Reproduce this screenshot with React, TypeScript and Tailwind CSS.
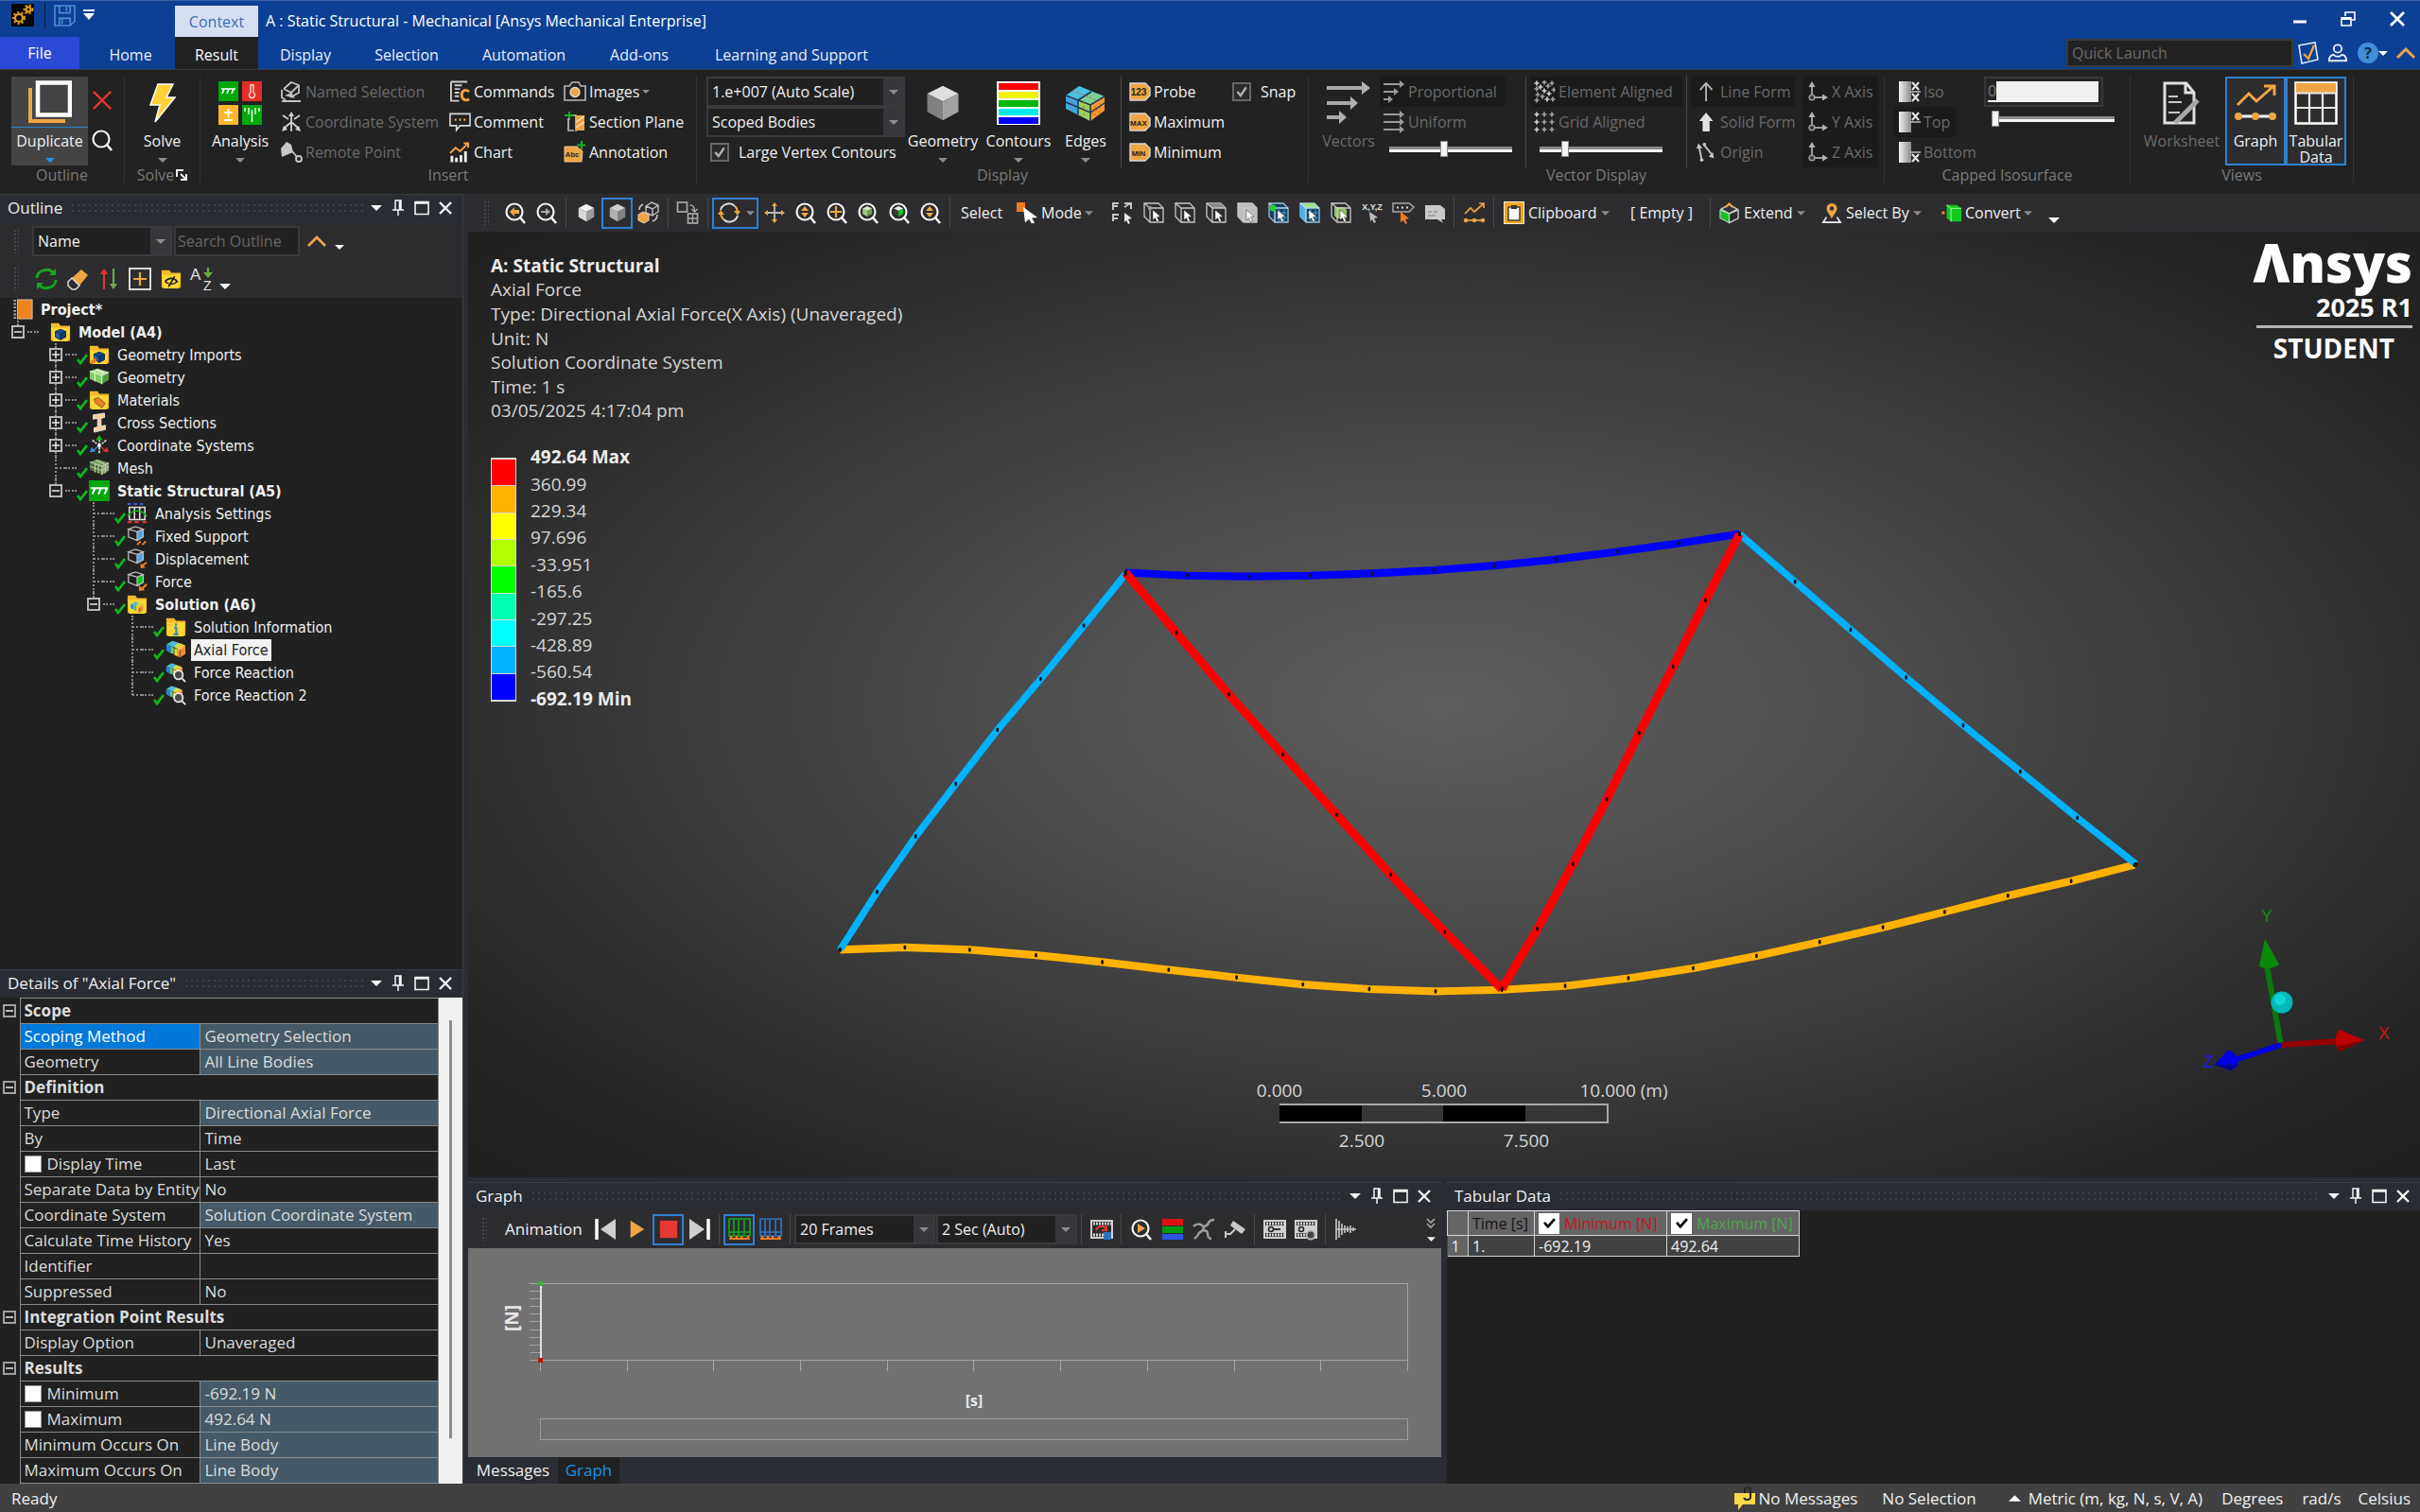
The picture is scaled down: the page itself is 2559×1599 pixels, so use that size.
import React from "react";

type P = { children?: React.ReactNode };

/* ---------- drawing helpers ---------- */
const ORANGE = "#efa544";

function Svg({ children, w = 24, h = 24, vb = "0 0 24 24" }: P & { w?: number; h?: number; vb?: string }) {
  return (
    <svg width={w} height={h} viewBox={vb} fill="none" className="shrink-0" aria-hidden="true">
      {children}
    </svg>
  );
}

function Tri({ w = 10, color = "#8c8c8c", up = false }: { w?: number; color?: string; up?: boolean }) {
  return (
    <Svg w={w} h={Math.round(w / 2)} vb="0 0 10 5">
      <path d={up ? "M0 5h10L5 0z" : "M0 0h10L5 5z"} fill={color} />
    </Svg>
  );
}

function CubeShape({ t = "#e8e8e8", l = "#c4c4c4", r = "#a4a4a4" }: { t?: string; l?: string; r?: string }) {
  return (
    <g>
      <path d="M12 2l9 4.5L12 11 3 6.500z" fill={t} />
      <path d="M3 6.500L12 11v11l-9-5z" fill={l} />
      <path d="M21 6.500L12 11v11l9-5z" fill={r} />
    </g>
  );
}

function Lens({ children, color = "#f2f2f2" }: P & { color?: string }) {
  return (
    <Svg>
      <circle cx="11" cy="11" r="8.500" stroke={color} strokeWidth="2.200" />
      <path d="M17 17l5 6" stroke={color} strokeWidth="2.600" />
      {children}
    </Svg>
  );
}

function PickBox({ kind }: { kind: number }) {
  const line = "#c9c9c9";
  const blue = kind === 4 || kind === 5;
  return (
    <Svg>
      <path d="M2 2h15l5 5v15H8l-6-6z" stroke={blue ? "#9fc3dc" : line} strokeWidth="1.300" fill={kind === 3 ? "#bdbdbd" : blue ? "#17405c" : "none"} />
      {kind === 2 && <path d="M2 2h15l5 5H8z" fill="#8a8a8a" />}
      {kind === 5 && <path d="M2 2h15l5 5H8z" fill="#a6e08f" />}
      {kind === 5 && <path d="M2 2l6 5v15l-6-6z" fill="#4fb0e6" />}
      {kind === 6 && <path d="M5 6h10l3 3v9H8l-3-3z" fill="#8fc65c" />}
      <path d="M2 2l6 5v15M8 7h14" stroke={blue ? "#bfe0ee" : line} strokeWidth="1.300" />
      {blue && <path d="M13 7v15M18 7v15M8 12h14M8 17h14" stroke="#4796cc" strokeWidth="1" />}
      {kind === 4 && <circle cx="6" cy="7" r="3.500" fill="#1fd03b" />}
      {kind === 0 && <circle cx="8" cy="7" r="2.200" fill="#9a9a9a" />}
      <path d="M11 9l8 7-3.500.500 2 4.500-2 1-2-4.500-2.500 2z" fill="#fff" stroke="#333" strokeWidth=".5" />
    </Svg>
  );
}

const Folder = ({ children }: P) => (
  <Svg w={22} h={22}>
    <path d="M1 2h9l2 3h11v17H1z" fill="#f4b92c" />
    <path d="M1 7h22l-2 16H3z" fill="#ffd735" />
    {children}
  </Svg>
);

const MiniCube = () => (
  <g stroke="#0b2d55" strokeWidth="1">
    <path d="M12 9l6 2.500-6 3-6-3z" fill="#12508c" />
    <path d="M6 11.500v6.500l6 3v-6.500z" fill="#1f5fa3" />
    <path d="M18 11.500v6.500l-6 3v-6.500z" fill="#0e3a6e" />
  </g>
);

const Blocks = ({ a, b, c, grid }: { a: string; b: string; c: string; grid?: string }) => (
  <g>
    <path d="M1 5l9-3 13 4-8 4z" fill={a} />
    <path d="M1 5v9l14 6V10z" fill={b} />
    <path d="M23 6v9l-8 5V10z" fill={c} />
    <path d="M1 5l14 5 8-4M15 10v10M7 7v10M8 3l10 4" stroke={grid ?? "#e9f5e2"} strokeWidth="1.200" />
    {grid && <path d="M1 10l14 5 8-5M11 8v10M19 8v10" stroke={grid} strokeWidth="1" />}
  </g>
);

const Rainbow = () => (
  <g>
    <path d="M1 6l7-4 15 5-6 5z" fill="#3fd0a0" />
    <path d="M1 6v7l5 3V8z" fill="#2f7fe0" />
    <path d="M6 8v8l4 1V10z" fill="#5fd08a" />
    <path d="M8 2l6 2-4 5-5-2z" fill="#5ab4e8" />
    <path d="M14 4l5 2-5 5-4-2z" fill="#c8e24c" />
    <path d="M10 10v8l4 2v-8z" fill="#e6dc3a" />
    <path d="M14 12v8l3 1 6-4V8z" fill="#f08a3a" />
    <path d="M18 5l5 3-7 5-3-1z" fill="#f5c23c" />
    <path d="M10 9v9M17 12v9" stroke="#4a3a20" strokeWidth=".8" />
  </g>
);

const WireCube = ({ fill }: { fill: string }) => (
  <g>
    <path d="M12 7l7-3v9l-7 4z" fill={fill} />
    <path d="M2 4l8-3 9 3-7 3zM2 4v9l10 4V7M19 4v9l-7 4" stroke="#bdbdbd" strokeWidth="1.400" />
  </g>
);

/* ---------- shared controls ---------- */
function Combo({ name, value }: { name: string; value: string }) {
  return (
    <div className="relative flex h-[32px] w-full shrink-0 border-2 border-[#3a3a3d] bg-[#212121]">
      <select aria-label={name} defaultValue={value} className="w-full appearance-none bg-transparent pl-1 text-[#f0f0f0] outline-none">
        <option>{value}</option>
      </select>
      <span className="pointer-events-none absolute inset-y-0 right-0 flex w-[21px] items-center justify-center bg-[#37373b]">
        <Tri />
      </span>
    </div>
  );
}

function Tick({ label }: { label: string }) {
  return (
    <label className="flex h-[32px] items-center gap-[10px]">
      <span className="relative flex size-[20px]">
        <input type="checkbox" defaultChecked className="size-[20px] appearance-none border-2 border-[#66666a] bg-[#2b2b2e]" />
        <span className="pointer-events-none absolute inset-0 flex items-center justify-center">
          <Svg w={14} h={14}><path d="M4 12l6 7L20 4" stroke="#b5b5b5" strokeWidth="4" /></Svg>
        </span>
      </span>
      {label}
    </label>
  );
}

function Slide({ name, value }: { name: string; value: number }) {
  return (
    <input
      type="range"
      aria-label={name}
      defaultValue={value}
      className="block h-[26px] w-[130px] appearance-none bg-transparent [&::-webkit-slider-runnable-track]:h-[6px] [&::-webkit-slider-runnable-track]:border-b-[3px] [&::-webkit-slider-runnable-track]:border-[#f4f4f4] [&::-webkit-slider-runnable-track]:bg-[#8a8a8a] [&::-webkit-slider-thumb]:-mt-[6px] [&::-webkit-slider-thumb]:h-[17px] [&::-webkit-slider-thumb]:w-[8px] [&::-webkit-slider-thumb]:appearance-none [&::-webkit-slider-thumb]:border [&::-webkit-slider-thumb]:border-[#8a8a8a] [&::-webkit-slider-thumb]:bg-[#f4f4f4]"
    />
  );
}

function Big({ icon, label, w, off, on, arrow = true }: { icon: React.ReactNode; label: string; w: string; off?: boolean; on?: boolean; arrow?: boolean }) {
  return (
    <button className={`flex h-[94px] flex-col items-center border-2 ${w} ${on ? "border-[#2f80d0] bg-[#2d2d30]" : "border-transparent"} ${off ? "text-[#6a6a6a]" : ""}`}>
      <span className="flex h-[52px] shrink-0 items-center justify-center">{icon}</span>
      <span className="pt-[6px] leading-[17px]">{label}</span>
      {arrow && <span className="mt-auto pb-[1px]"><Tri /></span>}
    </button>
  );
}

function Row({ icon, label, off, dark, arrow, w = "" }: { icon: React.ReactNode; label: string; off?: boolean; dark?: boolean; arrow?: boolean; w?: string }) {
  return (
    <button className={`flex h-[32px] shrink-0 items-center gap-[3px] whitespace-nowrap ${w} ${off ? "text-[#6a6a6a]" : ""} ${dark ? "bg-[#1b1b1b]" : ""}`}>
      {icon}
      {label}
      {arrow && <Tri w={8} />}
    </button>
  );
}

function Group({ label, w, children, extra }: P & { label: string; w: string; extra?: React.ReactNode }) {
  return (
    <section className={`flex h-[112px] shrink-0 flex-col border-r border-[#343434] ${w}`}>
      <div className="flex h-[96px]">{children}</div>
      <div className="flex h-4 items-center justify-center gap-[2px] leading-4 text-[#7a7a7a]">{label}{extra}</div>
    </section>
  );
}

const Sep = () => <span className="mx-1 h-[32px] w-px shrink-0 bg-[#4a4a4d]" />;
const VLine = ({ m }: { m: string }) => <span className={`h-full w-px shrink-0 bg-[#4a4a4a] ${m}`} />;
const Grip = () => <span className="h-[26px] w-[6px] shrink-0 bg-[radial-gradient(#48484d_1px,transparent_1px)] bg-[length:4px_4px]" />;

function Tool({ name, on, children }: P & { name: string; on?: boolean }) {
  return (
    <button aria-label={name} className={`flex size-[33px] shrink-0 items-center justify-center border-2 ${on ? "border-[#2f80d0]" : "border-transparent"}`}>
      {children}
    </button>
  );
}

function PanelHead({ title }: { title: string }) {
  return (
    <header className="flex h-[30px] shrink-0 items-center border-t border-[#3a3d44] bg-[#292c32] pr-[11px] pb-px pl-2 text-[17px]">
      <h2>{title}</h2>
      <span className="mx-2 h-[12px] flex-1 bg-[radial-gradient(#3f434a_1px,transparent_1px)] bg-[length:6px_6px]" />
      <div className="flex items-center gap-[10px]">
        <button aria-label="Menu"><Tri w={12} color="#f4f4f4" /></button>
        <button aria-label="Pin"><Svg w={14} h={18} vb="0 0 14 18"><path d="M4 1h6v10H4zM8.500 1v10M1 11h12M7 11v6" stroke="#f4f4f4" strokeWidth="1.500" /></Svg></button>
        <button aria-label="Maximize"><Svg w={16} h={16} vb="0 0 16 16"><path d="M1 1.500h14v13H1zM1 3h14" stroke="#f4f4f4" strokeWidth="1.600" /></Svg></button>
        <button aria-label="Close"><Svg w={14} h={14} vb="0 0 14 14"><path d="M1 1l12 12M13 1L1 13" stroke="#f4f4f4" strokeWidth="2.400" /></Svg></button>
      </div>
    </header>
  );
}

/* ---------- title bar and tabs ---------- */
const Gear = ({ x, y, r }: { x: number; y: number; r: number }) => (
  <g stroke="#e8a21c">
    <circle cx={x} cy={y} r={r} strokeWidth="2.200" />
    <circle cx={x} cy={y} r={r + 2} strokeWidth="2" strokeDasharray="2 2.300" />
  </g>
);

function TitleBar() {
  return (
    <header className="bg-[#0c4094]">
      <div className="flex h-[39px] items-center border-t border-[#3a62a8]">
        <div className="flex w-[185px] items-center pb-2 pl-3">
          <Svg w={24} h={24}>
            <rect width="24" height="24" fill="#060606" />
            <Gear x={8} y={15} r={4} />
            <Gear x={18} y={6} r={2.500} />
          </Svg>
          <span className="ml-[11px] h-[28px] w-px bg-[#0a1c40]" />
          <button aria-label="Save" className="ml-[9px]">
            <Svg w={23} h={23}><path d="M1 1h22v17l-5 5H1zM6 1v8h12V1M14 2v5M6 23v-8h12v8M9 16v5" stroke="#4a8fd0" strokeWidth="1.700" /></Svg>
          </button>
          <button aria-label="Customize quick access" className="ml-2">
            <Svg w={12} h={12} vb="0 0 12 12"><path d="M0 1h12" stroke="#fff" strokeWidth="2" /><path d="M0 4h12L6 11z" fill="#fff" /></Svg>
          </button>
        </div>
        <span className="flex h-[33px] w-[88px] items-center justify-center self-end bg-[#d5dff1] text-[#3e6db5]">Context</span>
        <h1 className="ml-2 pt-1 text-white">A : Static Structural - Mechanical [Ansys Mechanical Enterprise]</h1>
        <div className="ml-auto flex items-center gap-[36px] pr-4">
          <button aria-label="Minimize"><Svg w={14} h={14} vb="0 0 14 14"><path d="M0 10h14" stroke="#fff" strokeWidth="3" /></Svg></button>
          <button aria-label="Restore"><Svg w={16} h={18} vb="0 0 16 18"><path d="M5 6V2h10v8h-4M1 8h10v8H1z" stroke="#fff" strokeWidth="1.600" /><path d="M1 8.500h10" stroke="#fff" strokeWidth="3" /></Svg></button>
          <button aria-label="Close window"><Svg w={16} h={16} vb="0 0 16 16"><path d="M1 1l14 14M15 1L1 15" stroke="#fff" strokeWidth="2.800" /></Svg></button>
        </div>
      </div>
      <nav className="flex h-[34px] items-stretch text-[#e8eefa]">
        <button className="mr-[7px] w-[84px] bg-[#2b49d6] text-white">File</button>
        <button className="w-[94px] pt-1">Home</button>
        <button className="w-[88px] bg-[#222] pt-1 text-white">Result</button>
        <button className="w-[100px] pt-1">Display</button>
        <button className="w-[114px] pt-1">Selection</button>
        <button className="w-[134px] pt-1">Automation</button>
        <button className="w-[110px] pt-1">Add-ons</button>
        <button className="w-[212px] pt-1">Learning and Support</button>
        <div className="ml-auto flex items-center pr-1">
          <input aria-label="Quick Launch" placeholder="Quick Launch" className="h-[30px] w-[240px] border-2 border-[#3a3a3a] bg-[#222] px-[4px] outline-none placeholder:text-[#6b6b6b]" />
          <button aria-label="Tasks" className="ml-1">
            <Svg w={24} h={24}><path d="M2 4l17-3 3 18-17 4z" stroke="#dfe8f8" strokeWidth="1.600" /><path d="M7 13l5 5 6-14" stroke={ORANGE} strokeWidth="2.400" /></Svg>
          </button>
          <button aria-label="Account" className="ml-2">
            <Svg w={22} h={22}><circle cx="12" cy="7" r="4.500" stroke="#e8eefa" strokeWidth="2" /><path d="M2 21c0-6 4-7 5-7 3 3 7 3 10 0 1 0 5 1 5 7z" stroke="#e8eefa" strokeWidth="2" /></Svg>
          </button>
          <button aria-label="Help" className="ml-[10px] flex items-center">
            <span className="flex size-[22px] items-center justify-center rounded-full bg-[#3f8fd8] font-bold text-[#0c2350]">?</span>
            <Tri w={10} color="#fff" />
          </button>
          <button aria-label="Collapse ribbon" className="ml-2">
            <Svg w={22} h={14} vb="0 0 22 14"><path d="M2 12l9-9 9 9" stroke={ORANGE} strokeWidth="3" /></Svg>
          </button>
        </div>
      </nav>
    </header>
  );
}

/* ---------- ribbon ---------- */
const Tag = ({ t }: { t: string }) => (
  <Svg w={23} h={20} vb="0 0 23 20">
    <path d="M1 1h16l5 5v8l-5 5H1z" fill={ORANGE} stroke="#d8d8d8" strokeWidth="1.400" />
    <text x="10" y="13.500" textAnchor="middle" fontSize={t === "123" ? 10 : 8} fontWeight="700" fontFamily="Liberation Sans, sans-serif" fill="#222">{t}</text>
  </Svg>
);
const Axis = () => (
  <Svg w={24} h={24}>
    <path d="M6 18V3M6 18h15" stroke="#9c9c9c" strokeWidth="2" />
    <path d="M2.500 7L6 1l3.500 6zM17 14.500l6 3.500-6 3.500z" fill="#b5b5b5" />
    <circle cx="6" cy="18" r="2.800" stroke="#9c9c9c" strokeWidth="1.600" fill="#333" />
  </Svg>
);
const Lines = ({ xs }: { xs: number[] }) => (
  <Svg w={23} h={24} vb="0 0 23 24">
    {xs.map((x, i) => (
      <g key={i}>
        <path d={`M0 ${4 + i * 8}h${x}`} stroke="#9a9a9a" strokeWidth="2" />
        <path d={`M${x - 3} ${i * 8}l5 4-5 4z`} fill="#9a9a9a" />
      </g>
    ))}
  </Svg>
);
const Iso = ({ a, b }: { a: boolean; b: boolean }) => (
  <Svg w={23} h={24} vb="0 0 23 24">
    <defs><linearGradient id="isoFade"><stop offset="0" stopColor="#f2f2f2" /><stop offset="1" stopColor="#8b8b8b" /></linearGradient></defs>
    <rect x="0" y="1" width="13" height="22" fill="url(#isoFade)" />
    {a && <path d="M14 2l7 8M21 2l-7 8" stroke="#e2e2e2" strokeWidth="2.200" />}
    <path d="M12 12h11" stroke="#bbb" strokeWidth="1.500" />
    {b && <path d="M14 14l7 8M21 14l-7 8" stroke="#e2e2e2" strokeWidth="2.200" />}
  </Svg>
);
const Dots = ({ even }: { even?: boolean }) => (
  <Svg w={23} h={24} vb="0 0 23 24">
    {(even
      ? [[3, 4], [11, 4], [19, 4], [3, 12], [11, 12], [19, 12], [3, 20], [11, 20], [19, 20]]
      : [[3, 3], [11, 2], [19, 3], [7, 7], [15, 6], [3, 9], [11, 11], [21, 10], [4, 15], [16, 14], [9, 17], [3, 21], [14, 20], [20, 20]]
    ).map(([x, y], i) => (
      <path key={i} d={`M${x - 2.500} ${y}h5M${x} ${y - 2.500}v5`} stroke={i % 3 ? "#a0a0a0" : "#cfcfcf"} strokeWidth="1.700" />
    ))}
  </Svg>
);

function Ribbon() {
  return (
    <div className="flex h-[132px] overflow-hidden border-t border-[#3b3b3b] bg-[#222222] pt-[7px]">
      <Group label="Outline" w="w-[132px]">
        <div className="flex pl-3">
          <button className="flex h-[94px] w-[81px] flex-col items-center bg-[#444444]">
            <span className="flex h-[54px] w-full items-center justify-center border-b border-[#2f80c8]">
              <Svg w={46} h={46} vb="0 0 46 46">
                <path d="M2 8v35h37" stroke={ORANGE} strokeWidth="4" />
                <rect x="10" y="2.500" width="34" height="34" stroke="#fff" strokeWidth="4.500" fill="#444" />
              </Svg>
            </span>
            <span className="leading-[28px]">Duplicate</span>
            <span className="pt-1"><Tri color="#2f8fd8" /></span>
          </button>
          <div className="flex w-[30px] flex-col pt-1">
            <button aria-label="Delete" className="flex h-[42px] items-center justify-center"><Svg w={22} h={22}><path d="M2 2l20 20M22 2L2 22" stroke="#e5332f" strokeWidth="2.600" /></Svg></button>
            <button aria-label="Find" className="flex h-[42px] items-center justify-center"><Lens /></button>
          </div>
        </div>
      </Group>
      <Group label="Solve" w="w-[80px]" extra={<Svg w={12} h={12} vb="0 0 12 12"><path d="M1 8V1h7" stroke="#eee" strokeWidth="2" /><path d="M5 5l5 5M11 5v6H5" stroke="#eee" strokeWidth="2" /></Svg>}>
        <Big w="w-full" label="Solve" icon={<Svg w={28} h={42} vb="0 0 28 42"><path d="M9 1h16l-7 14h9L6 41l5-18H1z" fill="#ffd23c" stroke="#fff" strokeWidth="1.500" /></Svg>} />
      </Group>
      <Group label="Insert" w="w-[525px]">
        <Big w="w-[84px]" label="Analysis" icon={
          <Svg w={46} h={46} vb="0 0 46 46">
            <rect width="21" height="21" fill="#00a80b" /><rect x="25" width="21" height="21" fill="#e03027" />
            <rect y="25" width="21" height="21" fill="#fbb829" /><rect x="25" y="25" width="21" height="21" fill="#00a80b" />
            <path d="M3 8h15M6 8l-2 5M11 8l-2 5M16 8l-2 5" stroke="#fff" strokeWidth="1.600" />
            <path d="M34 4h3v8a3 3 0 11-3 0z" stroke="#ffd7d3" strokeWidth="1.400" />
            <path d="M6 33h9M10.500 29v9M6 41h9" stroke="#fff" strokeWidth="1.800" />
            <path d="M35.500 30v13M28 28v4M32 28v7M39 28v7M43 28v4" stroke="#d7ffd9" strokeWidth="1.600" />
          </Svg>} />
        <div className="flex w-[179px] flex-col">
          <Row off label="Named Selection" icon={<Svg w={24}><path d="M4 9l8-7 8 3v8l-9 5M4 9l8 4 8-8M12 13v5M2 22h20M2 10v8l4 3" stroke="#c4c4c4" strokeWidth="1.800" /><path d="M5 16l7-3 4 6z" fill="#c4c4c4" /></Svg>} />
          <Row off label="Coordinate System" icon={<Svg w={24}><path d="M12 12V3M12 12l8 7M12 12l-8 7M12 12v10M3 5l6 4M21 5l-6 4" stroke="#d0d0d0" strokeWidth="1.800" /><path d="M9 6l3-5 3 5zM16 20l6 2-2-6zM8 20l-6 2 2-6z" fill="#d0d0d0" /></Svg>} />
          <Row off label="Remote Point" icon={<Svg w={24}><path d="M1 8l6-7 5 3 2 8-12 5z" fill="#c8c8c8" /><path d="M13 11l5 6" stroke="#c8c8c8" strokeWidth="1.800" /><circle cx="20" cy="19" r="3" stroke="#c8c8c8" strokeWidth="1.800" /></Svg>} />
        </div>
        <div className="flex w-[121px] flex-col">
          <Row label="Commands" icon={<Svg w={23}><path d="M2 1h18M2 1v21h9M6 5h8M6 9h6M6 13h5M6 17h5" stroke="#d0d0d0" strokeWidth="2" /><path d="M22 12c-5-4-9 0-8 5s6 5 8 3" stroke={ORANGE} strokeWidth="3" /></Svg>} />
          <Row label="Comment" icon={<Svg w={23}><path d="M1 3h22v13H12l-4 5v-5H1z" stroke="#d8d8d8" strokeWidth="1.700" /><path d="M6 9.500h2M11 9.500h2M16 9.500h2" stroke={ORANGE} strokeWidth="2.500" /></Svg>} />
          <Row label="Chart" icon={<Svg w={23}><path d="M3 16v7M8 18v5M13 15v8M18 11v12" stroke="#eee" strokeWidth="3" /><path d="M1 13l6-6 5 4 9-9M16 2h5v5" stroke={ORANGE} strokeWidth="2" /></Svg>} />
        </div>
        <div className="flex flex-col">
          <Row label="Images" arrow icon={<Svg w={24}><path d="M1 6h5l3-4h7l2 4h5v15H1z" stroke="#b8b8b8" strokeWidth="1.600" /><circle cx="12" cy="12.500" r="5" fill={ORANGE} stroke="#ddd" strokeWidth="1.300" /></Svg>} />
          <Row label="Section Plane" icon={<Svg w={24}><path d="M6 1v9M1 5h9" stroke="#12b51f" strokeWidth="1.800" /><path d="M5 8v13h6M10 5h3v17" stroke="#bbb" strokeWidth="1.700" /><path d="M13 5h9v16h-9z" fill={ORANGE} /><path d="M13 12l9-6M13 18l9-6" stroke="#fbe3c0" strokeWidth="1.500" /></Svg>} />
          <Row label="Annotation" icon={<Svg w={24}><path d="M1 6h13l6 5-1 11H1z" fill={ORANGE} stroke="#e5c79a" strokeWidth="1" /><text x="9" y="17" fontSize="8" fontWeight="700" textAnchor="middle" fill="#2a2a2a" fontFamily="Liberation Sans, sans-serif">Abc</text><path d="M19 0v9M14 4.500h9" stroke="#12b51f" strokeWidth="2" /></Svg>} />
        </div>
      </Group>
      <Group label="Display" w="w-[647px]">
        <div className="ml-[10px] flex w-[210px] flex-col">
          <Combo name="Result scale" value="1.e+007 (Auto Scale)" />
          <Combo name="Scoping" value="Scoped Bodies" />
          <div className="pl-1"><Tick label="Large Vertex Contours" /></div>
        </div>
        <Big w="w-[80px]" label="Geometry" icon={<Svg w={44} h={44}><CubeShape t="#dedede" l="#808080" r="#a2a2a2" /></Svg>} />
        <Big w="w-[80px]" label="Contours" icon={<Svg w={46} h={46} vb="0 0 46 46"><rect width="46" height="46" fill="#fff" />
          {["#fd0000", "#eef400", "#00b50b", "#00ecec", "#0000fd"].map((c, i) => <rect key={c} x="2" y={2 + i * 9} width="42" height="7" fill={c} />)}</Svg>} />
        <Big w="w-[62px]" label="Edges" icon={
          <Svg w={44} h={40} vb="0 0 44 40">
            <path d="M1 12L15 2l27 11-15 9z" fill="#4cc0e0" /><path d="M1 12v14l26 13V22z" fill="#3aa7e6" /><path d="M42 13v15L27 39V22z" fill="#f59a2f" />
            <path d="M14 17v15l13 7V22z" fill="#9ad05b" /><path d="M28 8l14 5-15 9-13-5z" fill="#7bd09a" />
            <path d="M1 12l26 10 15-9M27 22v17M14 17l14-9M14 17v15M1 19l26 11 15-10" stroke="#1b3550" strokeWidth="1.500" />
            <path d="M7 14v15M20 19v16M32 19v16M37 16v16M8 7l26 10M33 27l4 4M29 30l3 3" stroke="#e2573d" strokeWidth="1" strokeDasharray="2 2" />
          </Svg>} />
        <VLine m="ml-[6px]" />
        <div className="ml-2 flex w-[109px] flex-col">
          <Row label="Probe" icon={<Tag t="123" />} />
          <Row label="Maximum" icon={<Tag t="MAX" />} />
          <Row label="Minimum" icon={<Tag t="MIN" />} />
        </div>
        <div><Tick label="Snap" /></div>
      </Group>
      <Group label="Vector Display" w="w-[609px]">
        <div className="ml-[9px]"><Big off arrow={false} w="w-[66px]" label="Vectors" icon={
          <Svg w={46} h={46} vb="0 0 46 46"><path d="M0 7h38M0 23h26M0 38h14" stroke="#a8a8a8" strokeWidth="4" /><path d="M37 0l9 7-9 7zM25 16l8 7-8 7zM13 31l8 7-8 7z" fill="#b0b0b0" /></Svg>} /></div>
        <div className="flex w-[154px] flex-col">
          <Row off dark w="w-[133px] pl-1" label="Proportional" icon={<Lines xs={[20, 14, 8]} />} />
          <Row off w="pl-1" label="Uniform" icon={<Lines xs={[20, 20, 20]} />} />
          <div className="ml-[10px]"><Slide name="Vector length" value={44} /></div>
        </div>
        <VLine m="mr-[4px]" />
        <div className="flex w-[161px] flex-col">
          <Row off dark w="w-[161px] pl-1" label="Element Aligned" icon={<Dots />} />
          <Row off w="pl-1" label="Grid Aligned" icon={<Dots even />} />
          <div className="ml-[10px]"><Slide name="Grid density" value={19} /></div>
        </div>
        <VLine m="mx-[4px]" />
        <div className="flex w-[118px] flex-col">
          <Row off dark w="w-[110px] pl-[6px]" label="Line Form" icon={<Svg w={22}><path d="M11 23V4M4 10l7-8 7 8" stroke="#b8b8b8" strokeWidth="2" /></Svg>} />
          <Row off w="pl-[6px]" label="Solid Form" icon={<Svg w={22}><path d="M11 1l8 10h-4v12H7V11H3z" fill="#e2e2e2" /></Svg>} />
          <Row off w="pl-[6px]" label="Origin" icon={<Svg w={22}><path d="M6 21L3 6M9 4l9 11" stroke="#c8c8c8" strokeWidth="2" /><path d="M0 8l2-6 5 5zM20 19l-6-2 5-5z" fill="#c8c8c8" /><circle cx="6" cy="21" r="2" fill="#c8c8c8" /><circle cx="9" cy="3" r="2" fill="#c8c8c8" /></Svg>} />
        </div>
        <div className="flex w-[80px] flex-col">
          {["X Axis", "Y Axis", "Z Axis"].map((a) => <Row key={a} off dark w="w-full pl-1" label={a} icon={<Axis />} />)}
        </div>
      </Group>
      <Group label="Capped Isosurface" w="w-[260px]">
        <div className="ml-[10px] flex w-[95px] flex-col">
          <Row off w="pl-[5px]" label="Iso" icon={<Iso a b />} />
          <Row off dark w="w-[65px] pl-[5px]" label="Top" icon={<Iso a b={false} />} />
          <Row off w="pl-[5px]" label="Bottom" icon={<Iso a={false} b />} />
        </div>
        <div className="flex flex-col">
          <label className="flex h-[32px] w-[126px] shrink-0 items-center border-2 border-[#38383b] bg-[#252527] px-[2px] text-[#7a7a7a]">
            <span className="border-b-2 border-white leading-[20px]">0</span>
            <input aria-label="Isosurface value" className="h-[22px] w-[108px] bg-[#f0f0f0] outline-none" />
          </label>
          <div className="ml-2"><Slide name="Isosurface position" value={0} /></div>
        </div>
      </Group>
      <Group label="Views" w="w-[236px]">
        <div className="ml-[8px]"><Big off arrow={false} w="w-[92px]" label="Worksheet" icon={
          <Svg w={40} h={46} vb="0 0 40 46"><path d="M2 2h23l8 10v32H2zM24 2v10h9" stroke="#e0e0e0" strokeWidth="3" /><path d="M6 16h10M6 22h14M6 33h12" stroke="#c8c8c8" strokeWidth="2" /><path d="M37 20L17 40l-4 4" stroke="#a8a8a8" strokeWidth="5" /></Svg>} /></div>
        <Big on arrow={false} w="w-[64px]" label="Graph" icon={
          <Svg w={44} h={44} vb="0 0 44 44"><path d="M3 24l12-12 8 8L40 5M31 4h11v10" stroke={ORANGE} strokeWidth="3" /><path d="M2 36h40" stroke="#fff" strokeWidth="3" />{[4, 22, 40].map((x) => <circle key={x} cx={x} cy="36" r="4" fill={ORANGE} />)}</Svg>} />
        <Big on arrow={false} w="w-[64px]" label="Tabular Data" icon={
          <Svg w={46} h={46} vb="0 0 46 46"><rect x="1.500" y="1.500" width="43" height="43" stroke="#fff" strokeWidth="2.500" /><rect x="2" y="2" width="42" height="10" fill={ORANGE} /><path d="M2 12.500h42M2 28h42M16 12v32M30 12v32" stroke="#e8e8e8" strokeWidth="2.200" /></Svg>} />
      </Group>
    </div>
  );
}

/* ---------- outline tree ---------- */
type Node = { t: string; lv: number; ex?: "+" | "-"; check?: boolean; bold?: boolean; last?: boolean; sel?: boolean; icon: React.ReactNode };
const Ic = ({ children }: P) => <Svg w={22} h={22}>{children}</Svg>;
const reaction = <Ic><g transform="scale(.85)"><Rainbow /></g><circle cx="15" cy="15" r="5" stroke="#e6e6e6" strokeWidth="2" fill="#4a4a4a" /><path d="M19 19l4 4" stroke="#e6e6e6" strokeWidth="2" /></Ic>;
const nodes: Node[] = [
  { t: "Project*", lv: 0, bold: true, icon: <Ic><rect x="6" y="1" width="17" height="22" fill="#ee8322" stroke="#d9c3ad" /><path d="M3 1v22" stroke="#aaa" strokeWidth="3" strokeDasharray="2 2" /></Ic> },
  { t: "Model (A4)", lv: 1, ex: "-", bold: true, last: true, icon: <Folder><MiniCube /></Folder> },
  { t: "Geometry Imports", lv: 2, ex: "+", check: true, icon: <Folder><MiniCube /><path d="M3 22l5-5" stroke="#ee7b1f" strokeWidth="4" /></Folder> },
  { t: "Geometry", lv: 2, ex: "+", check: true, icon: <Ic><Blocks a="#b5e39a" b="#83cc63" c="#4f9a3c" /></Ic> },
  { t: "Materials", lv: 2, ex: "+", check: true, icon: <Folder><path d="M6 11l5-2 8 7-4 5-8-6z" fill="#e8822a" stroke="#7a5a10" /></Folder> },
  { t: "Cross Sections", lv: 2, ex: "+", check: true, icon: <Ic><path d="M5 3l13-2v5l-4 1v9l5-1v5L6 23v-5l4-1V7L5 8z" fill="#f6cf9c" stroke="#fff" strokeWidth=".8" /></Ic> },
  { t: "Coordinate Systems", lv: 2, ex: "+", check: true, icon: <Ic><path d="M12 12V4M4 6l5 4M20 6l-5 4M12 14v8" stroke="#ccc" strokeWidth="2" strokeDasharray="3 1" /><path d="M8 6l4-6 4 6z" fill="#12b51f" /><path d="M1 20l2-6 5 5z" fill="#3a8fe0" /><path d="M23 20l-2-6-5 5z" fill="#e03030" /><path d="M12 12l-7 6" stroke="#3a8fe0" strokeWidth="1.500" /><path d="M12 12l7 6" stroke="#e03030" strokeWidth="1.500" /><circle cx="12" cy="12" r="2.200" fill="#fff" /></Ic> },
  { t: "Mesh", lv: 2, check: true, icon: <Ic><Blocks a="#7a9a62" b="#4f6f3a" c="#8aa376" grid="#c5d4b6" /></Ic> },
  { t: "Static Structural (A5)", lv: 2, ex: "-", check: true, bold: true, last: true, icon: <Ic><rect width="24" height="24" fill="#00a80b" /><path d="M2 9h20M7 9l-3 7M14 9l-3 7M21 9l-3 7" stroke="#fff" strokeWidth="2.200" /></Ic> },
  { t: "Analysis Settings", lv: 3, check: true, icon: <Ic><path d="M3 5h18v14H3zM9 5v14M15 5v14" stroke="#e0e0e0" strokeWidth="1.700" /><path d="M1 15c6-8 16-8 22 0" stroke="#12b51f" strokeWidth="1.800" /><path d="M1 1h4M8 1h4M15 1h4" stroke="#3a5be0" strokeWidth="2.500" /><path d="M1 22h5M9 22h5M18 22h5" stroke="#e03030" strokeWidth="2.500" /></Ic> },
  { t: "Fixed Support", lv: 3, check: true, icon: <Ic><WireCube fill="#4fa3e8" /><path d="M12 22l4-4M18 22l4-4" stroke="#e8822a" strokeWidth="2" /></Ic> },
  { t: "Displacement", lv: 3, check: true, icon: <Ic><WireCube fill="#4fa3e8" /><path d="M16 23v-6l6 5z" fill="#e8822a" /><path d="M18 20l5-4" stroke="#e8822a" strokeWidth="2" /></Ic> },
  { t: "Force", lv: 3, check: true, icon: <Ic><WireCube fill="#12c51f" /><path d="M14 23v-7l7 6z" fill="#e8822a" /><path d="M18 20l5-5" stroke="#e8822a" strokeWidth="2.500" /></Ic> },
  { t: "Solution (A6)", lv: 3, ex: "-", check: true, bold: true, last: true, icon: <Folder><g transform="translate(4 8) scale(.65)"><Rainbow /></g></Folder> },
  { t: "Solution Information", lv: 4, check: true, icon: <Folder><path d="M12 8v3M10 13h2.500v7M9 20.500h6" stroke="#3a8fb0" strokeWidth="2.400" /></Folder> },
  { t: "Axial Force", lv: 4, check: true, sel: true, icon: <Ic><Rainbow /></Ic> },
  { t: "Force Reaction", lv: 4, check: true, icon: reaction },
  { t: "Force Reaction 2", lv: 4, check: true, last: true, icon: reaction },
];
const pad = ["pl-0", "pl-[8px]", "pl-[48px]", "pl-[88px]", "pl-[129px]"];

function Tree() {
  return (
    <ul className="flex-1 overflow-hidden bg-[#212121] font-['DejaVu_Sans_Condensed','DejaVu_Sans',sans-serif] text-[16px]">
      {nodes.map((n) => (
        <li key={n.t} className={`flex h-[24px] items-center ${pad[n.lv]}`}>
          {n.lv > 0 ? (
            <span className="relative flex h-full w-[21px] items-center justify-center">
              <span className={`absolute top-0 left-[10px] border-l-2 border-dotted border-[#8a8a8a] ${n.last ? "h-1/2" : "h-full"}`} />
              {n.ex ? (
                <button aria-label={n.ex === "+" ? `Expand ${n.t}` : `Collapse ${n.t}`} className="relative flex size-[14px] items-center justify-center border-2 border-[#b8b8b8] bg-[#212121]">
                  <Svg w={8} h={8} vb="0 0 8 8"><path d={n.ex === "+" ? "M0 4h8M4 0v8" : "M0 4h8"} stroke="#e8e8e8" strokeWidth="1.500" /></Svg>
                </button>
              ) : (
                <span className="ml-auto w-[10px] border-t-2 border-dotted border-[#8a8a8a]" />
              )}
            </span>
          ) : (
            <span className="w-[13px]" />
          )}
          {n.lv > 0 && <span className="w-[12px] border-t-2 border-dotted border-[#8a8a8a]" />}
          {n.check && (
            <span className="flex w-[13px] items-end pt-2"><Svg w={12} h={13} vb="0 0 12 13"><path d="M1 7l3 4 7-9" stroke="#12b51f" strokeWidth="2.800" /></Svg></span>
          )}
          {n.lv === 1 && <span className="w-[12px]" />}
          {n.icon}
          <span className={`ml-[5px] px-[3px] leading-[23px] whitespace-nowrap ${n.bold ? "font-bold" : ""} ${n.sel ? "bg-[#f2f2f2] text-[#222]" : ""}`}>{n.t}</span>
        </li>
      ))}
    </ul>
  );
}

function Outline() {
  return (
    <section className="flex min-h-0 flex-1 flex-col">
      <PanelHead title="Outline" />
      <div className="flex h-[40px] shrink-0 items-center bg-[#2d2d30] pl-[14px]">
        <Grip />
        <div className="ml-[14px] w-[148px]"><Combo name="Filter by" value="Name" /></div>
        <input aria-label="Search Outline" placeholder="Search Outline" className="ml-[2px] h-[32px] w-[133px] border-2 border-[#3a3a3d] bg-[#212121] px-[2px] outline-none placeholder:text-[#666]" />
        <button aria-label="Collapse search" className="ml-[8px]"><Svg w={20} h={12} vb="0 0 20 12"><path d="M1 11l9-9 9 9" stroke={ORANGE} strokeWidth="2.800" /></Svg></button>
        <button aria-label="More filters" className="mt-3 ml-[9px]"><Tri color="#f4f4f4" /></button>
      </div>
      <div className="flex h-[40px] shrink-0 items-center bg-[#2d2d30] pl-[14px]">
        <Grip />
        <div className="ml-[12px] flex items-center">
          <Tool name="Refresh"><Svg><path d="M2 11a10 9 0 0118-5M22 13a10 9 0 01-18 5" stroke="#12a51f" strokeWidth="2.800" /><path d="M22 1v7h-7zM2 23v-7h7z" fill="#12a51f" /></Svg></Tool>
          <Tool name="Clear"><Svg><path d="M6 11L16 2l7 6-9 11z" fill={ORANGE} /><path d="M6 11l8 8-4 4H6l-4-4v-4z" stroke="#ddd" strokeWidth="1.500" /></Svg></Tool>
          <Tool name="Sort"><Svg><path d="M7 23V5" stroke="#e5332f" strokeWidth="2.200" /><path d="M3 7l4-6 4 6z" fill="#e5332f" /><path d="M17 1v18" stroke="#6fa84a" strokeWidth="2.200" /><path d="M13 17l4 6 4-6z" fill="#6fa84a" /></Svg></Tool>
          <Tool name="Expand all"><Svg><path d="M1 1h22v22H1z" stroke="#d8d8d8" strokeWidth="2" /><path d="M12 5v14M5 12h14" stroke={ORANGE} strokeWidth="2.200" /></Svg></Tool>
          <Tool name="Hide folders"><Folder><path d="M5 15c4-5 10-5 14 0-4 4-10 4-14 0M16 9l-7 12" stroke="#222" strokeWidth="1.800" /></Folder></Tool>
          <Tool name="Sort alphabetically"><Svg w={29} h={32} vb="0 0 29 32"><text x="2" y="17" fontSize="17" fill="#e0e0e0" fontFamily="Liberation Sans, sans-serif">A</text><text x="16" y="28" fontSize="14" fill="#e0e0e0" fontFamily="Liberation Sans, sans-serif">Z</text><path d="M21 4v6" stroke="#6fa84a" strokeWidth="2.200" /><path d="M16 9l5 6 5-6z" fill="#6fa84a" /></Svg></Tool>
          <button aria-label="More tools" className="mt-4 ml-[2px]"><Tri w={12} color="#f4f4f4" /></button>
        </div>
      </div>
      <Tree />
    </section>
  );
}

/* ---------- details ---------- */
type D = { g?: string; k?: string; v?: string; ro?: boolean; box?: boolean; sel?: boolean };
const details: D[] = [
  { g: "Scope" },
  { k: "Scoping Method", v: "Geometry Selection", ro: true, sel: true },
  { k: "Geometry", v: "All Line Bodies", ro: true },
  { g: "Definition" },
  { k: "Type", v: "Directional Axial Force", ro: true },
  { k: "By", v: "Time" },
  { k: "Display Time", v: "Last", box: true },
  { k: "Separate Data by Entity", v: "No" },
  { k: "Coordinate System", v: "Solution Coordinate System", ro: true },
  { k: "Calculate Time History", v: "Yes" },
  { k: "Identifier", v: "" },
  { k: "Suppressed", v: "No" },
  { g: "Integration Point Results" },
  { k: "Display Option", v: "Unaveraged" },
  { g: "Results" },
  { k: "Minimum", v: "-692.19 N", ro: true, box: true },
  { k: "Maximum", v: "492.64 N", ro: true, box: true },
  { k: "Minimum Occurs On", v: "Line Body", ro: true },
  { k: "Maximum Occurs On", v: "Line Body", ro: true },
];

function Details() {
  return (
    <section className="flex shrink-0 flex-col">
      <PanelHead title={'Details of "Axial Force"'} />
      <div className="flex bg-[#212121]">
        <table className="w-[464px] table-fixed border-collapse text-[17px] leading-[22px] text-[#dcdcdc]">
          <colgroup><col className="w-[21px]" /><col className="w-[190px]" /><col /></colgroup>
          <tbody>
            {details.map((d) => (
              <tr key={d.g ?? d.k} className="h-[27px]">
                <td className="p-0">
                  {d.g && (
                    <button aria-label={`Collapse ${d.g}`} className="ml-[3px] flex size-[14px] items-center justify-center border-2 border-[#a0a0a0]">
                      <Svg w={8} h={8} vb="0 0 8 8"><path d="M0 4h8" stroke="#e8e8e8" strokeWidth="1.500" /></Svg>
                    </button>
                  )}
                </td>
                {d.g ? (
                  <th colSpan={2} scope="colgroup" className="border border-[#8a8a8a] px-1 py-0 text-left font-bold">{d.g}</th>
                ) : (
                  <>
                    <th scope="row" className={`border border-[#8a8a8a] px-1 py-0 text-left font-normal whitespace-nowrap ${d.sel ? "bg-[#0078d7] text-white" : ""}`}>
                      {d.box ? (
                        <label className="flex items-center gap-[6px]"><input type="checkbox" className="size-[18px] appearance-none border border-[#999] bg-white" />{d.k}</label>
                      ) : d.k}
                    </th>
                    <td className={`border border-[#8a8a8a] px-[5px] py-0 whitespace-nowrap ${d.ro ? "bg-[#455a66]" : ""}`}>{d.v}</td>
                  </>
                )}
              </tr>
            ))}
          </tbody>
        </table>
        <div className="flex flex-1 justify-center bg-[#f0f0f0] pt-[24px] pb-[48px]"><span className="w-[3px] bg-[#8a8a8a]" /></div>
      </div>
    </section>
  );
}

/* ---------- graphics area ---------- */
function GraphicsToolbar() {
  return (
    <div className="flex h-[40px] shrink-0 items-center overflow-hidden bg-[#2d2d30] pl-4 whitespace-nowrap">
      <Grip />
      <span className="w-[11px] shrink-0" />
      <Tool name="Previous view"><Lens><path d="M6 11l5-5v3h5v4h-5v3z" fill={ORANGE} /></Lens></Tool>
      <Tool name="Next view"><Lens><path d="M16 11l-5-4v3H6v2h5v3z" fill="#a8a8a8" /></Lens></Tool>
      <Sep />
      <Tool name="Isometric view"><Svg w={22}><CubeShape t="#f2f2f2" l="#d8d8d8" r="#9c9c9c" /></Svg></Tool>
      <Tool name="Look at face" on><Svg w={22}><CubeShape t="#d0d0d0" l="#b0b0b0" r="#848484" /></Svg></Tool>
      <Tool name="Rotate views"><Svg w={26}><path d="M9 5l6-4 7 3v7l-6 4-7-3zM9 5l7 3 6-4M16 8v7" stroke="#c4c4c4" strokeWidth="1.400" /><path d="M1 14l5-3 6 3v6l-5 3-6-3z" fill={ORANGE} stroke="#e8d5b5" strokeWidth="1" /><path d="M2 9c0-4 2-5 4-6M21 14c0 4-2 6-5 7" stroke="#c4c4c4" strokeWidth="1.600" /></Svg></Tool>
      <Sep />
      <Tool name="Align views"><Svg w={25}><rect x="1" y="1" width="10" height="10" stroke="#a8a8a8" strokeWidth="1.700" /><rect x="12" y="13" width="10" height="10" stroke="#a8a8a8" strokeWidth="1.700" /><path d="M17 13v10M12 18h10M14 4c4 0 5 2 5 6M16 8l3 3 3-3" stroke="#a8a8a8" strokeWidth="1.400" /></Svg></Tool>
      <Sep />
      <button aria-label="Rotate" className="flex h-[33px] w-[49px] shrink-0 items-center gap-[6px] border-2 border-[#2f80d0] pl-1">
        <Svg><path d="M3 9A9 9 0 0118 5M21 15a9 9 0 01-15 4" stroke="#dcdcdc" strokeWidth="2" /><path d="M18 5a9 9 0 013 7M6 19a9 9 0 01-3-7" stroke={ORANGE} strokeWidth="2" /><path d="M17 10h7l-3 5zM0 14h7l-4-5z" fill={ORANGE} /></Svg>
        <Tri w={9} />
      </button>
      <Tool name="Pan"><Svg><path d="M12 4v16M4 12h16" stroke="#bdbdbd" strokeWidth="1.800" /><path d="M9 5l3-4 3 4zM9 19l3 4 3-4zM5 9l-4 3 4 3zM19 9l4 3-4 3z" fill={ORANGE} /></Svg></Tool>
      <Tool name="Zoom"><Lens><path d="M7 10l4-5 4 5zM7 12l4 5 4-5z" fill={ORANGE} /></Lens></Tool>
      <Tool name="Box zoom"><Lens><path d="M11 5v12M5 11h12" stroke={ORANGE} strokeWidth="2.200" /></Lens></Tool>
      <Tool name="Zoom to fit"><Lens><g transform="translate(4.500 4) scale(.55)"><CubeShape t="#d6e8c4" l="#9ecb78" r="#6f9e4c" /></g></Lens></Tool>
      <Tool name="Zoom to selection"><Lens><g transform="translate(4.500 4) scale(.55)"><CubeShape t="#eee" l="#3a3a3a" r="#12c51f" /></g></Lens></Tool>
      <Tool name="Toggle magnifier"><Lens><path d="M7 10l4-5 4 5zM7 12l4 5 4-5z" fill={ORANGE} /></Lens></Tool>
      <Sep />
      <button className="w-[58px] shrink-0 pl-[7px] text-left">Select</button>
      <button className="flex w-[103px] shrink-0 items-center gap-[3px] pl-[7px]">
        <Svg><rect x="1" y="1" width="9" height="10" fill="#ee7b1f" /><path d="M8 6l15 11-6 .5 3 5-3 1-3-5-4 4z" fill="#fff" /></Svg>Mode<Tri w={9} />
      </button>
      <Tool name="Smart select"><Svg><path d="M2 9V2h6M2 5h5M14 2h7v6M14 6l6-4M2 21v-7h6M2 18h5" stroke="#c4c4c4" strokeWidth="2" /><path d="M14 12l8 6-4 1 2 4-2 1-2-4-2 2z" fill="#e8e8e8" /></Svg></Tool>
      {["Vertex", "Edge", "Face", "Body", "Node", "Element face", "Element"].map((s, i) => (
        <Tool key={s} name={`Select ${s}`}><PickBox kind={i} /></Tool>
      ))}
      <Tool name="Hit point coordinate"><Svg><text x="12" y="9" textAnchor="middle" fontSize="9" fontWeight="700" fill="#e0e0e0" fontFamily="Liberation Sans, sans-serif">X,Y,Z</text><path d="M9 11l9 6-4 1 2 4-2 1-2-4-2 2z" fill="#bdbdbd" /></Svg></Tool>
      <Tool name="Label"><Svg><path d="M1 2h17l5 4-5 5H1z" stroke="#a8a8a8" strokeWidth="1.500" /><path d="M5 6.500h2M10 6.500h2M15 6.500h2" stroke="#ddd" strokeWidth="2" /><path d="M9 11l9 7-4 1 2 4-2 1-2-4-3 2z" fill="#ee7b1f" /></Svg></Tool>
      <Tool name="Annotate"><Svg><path d="M2 4h16l5 4v11h-4l2 4-6-4H2z" fill="#c9c9c9" /><path d="M5 11h4M11 11h4M5 15h8" stroke="#999" strokeWidth="1.500" /></Svg></Tool>
      <Sep />
      <Tool name="Measure"><Svg><path d="M2 13l6-6 4 4 9-8M17 2h5v5" stroke={ORANGE} strokeWidth="1.700" /><path d="M2 20h20" stroke={ORANGE} strokeWidth="1.700" />{[3, 12, 21].map((x) => <circle key={x} cx={x} cy="20" r="2.200" fill={ORANGE} />)}</Svg></Tool>
      <Sep />
      <button className="flex w-[129px] shrink-0 items-center gap-[4px] pl-[6px]">
        <Svg w={22} h={24} vb="0 0 22 24"><rect width="22" height="24" fill="#f7f0dd" /><rect x="1" y="1" width="20" height="22" fill="#f2a71f" /><rect x="5" y="6" width="12" height="14" fill="#fff" stroke="#333" strokeWidth="1.400" /><rect x="8" y="4" width="6" height="4" fill="#333" /></Svg>
        Clipboard<Tri w={9} />
      </button>
      <button className="w-[91px] shrink-0 pl-[11px] text-left">[ Empty ]</button>
      <Sep />
      <button className="flex w-[105px] shrink-0 items-center gap-[4px] pl-[4px]">
        <Svg w={23}><path d="M3 8l9-5 9 5-9 5z" fill="#333" stroke="#ccc" strokeWidth="1.400" /><path d="M2 9v9l10 5V13z" fill="#12c51f" stroke="#dcdcdc" /><path d="M22 9v9l-10 5V13z" stroke="#ccc" strokeWidth="1.400" /><path d="M8 6l4-4 4 4" stroke={ORANGE} strokeWidth="2" /></Svg>
        Extend<Tri w={9} />
      </button>
      <button className="flex w-[130px] shrink-0 items-center gap-[4px] pl-[8px]">
        <Svg w={22}><path d="M12 1a6 6 0 016 6c0 4-4 7-6 12-2-5-6-8-6-12a6 6 0 016-6z" fill={ORANGE} /><circle cx="12" cy="7" r="2.500" fill="#2d2d30" /><path d="M6 17l-4 6h20l-4-6" stroke="#f2f2f2" strokeWidth="1.800" /></Svg>
        Select By<Tri w={9} />
      </button>
      <button className="flex w-[112px] shrink-0 items-center gap-[3px] pl-[5px]">
        <Svg w={22}><path d="M6 3h12l5 4v15H11l-5-4z" fill="#12c51f" /><path d="M6 3l5 4h12M11 7v15" stroke="#7df08a" strokeWidth="1.500" /><circle cx="2" cy="12" r="2" fill="#ee7b1f" /></Svg>
        Convert<Tri w={9} />
      </button>
      <button aria-label="More commands" className="mt-4 ml-[6px]"><Tri w={12} color="#f4f4f4" /></button>
    </div>
  );
}

type Pt = [number, number];
const members: { c: string; w: number; p: Pt[] }[] = [
  { c: "#ffb200", w: 5, p: [[544, 615.5], [586, 614], [628, 615.500], [671, 619], [714, 623.500], [757, 628.500], [801, 633.500], [844, 638], [887, 641], [930, 642.500], [973, 641.500], [1014, 639], [1055, 634], [1097, 627.500], [1138, 619.500], [1179, 610.500], [1220, 601], [1260, 591], [1301, 580.500], [1342, 571], [1383, 560.500]] },
  { c: "#00b2ff", w: 4.500, p: [[544, 615.500], [568, 578], [593, 542], [619, 508], [646, 473], [674, 440], [702, 405.500], [729, 372]] },
  { c: "#00b2ff", w: 4.500, p: [[1127, 346], [1163, 377], [1199, 408], [1235, 439], [1272, 470], [1309, 500], [1346, 530], [1384, 560]] },
  { c: "#0000ff", w: 5, p: [[729, 371], [769, 373], [809, 373.500], [849, 373], [889, 371.500], [929, 369.500], [968, 366.500], [1008, 362.500], [1048, 357.500], [1088, 352], [1127, 346]] },
  { c: "#ff0000", w: 5.500, p: [[729, 371], [762, 410], [796, 450], [831, 489], [866, 528], [901, 567], [936, 604], [973, 641]] },
  { c: "#ff0000", w: 5.500, p: [[1127, 346], [1105, 389], [1084, 432], [1062, 475], [1041, 518], [1019, 560], [996, 602], [973, 641]] },
];
const poly = (p: Pt[]) => p.map(([x, y]) => `${x},${y}`).join(" ");

const legend = [
  ["492.64 Max", "bg-[#ff0000]"], ["360.99", "bg-[#ffb200]"], ["229.34", "bg-[#ffff00]"], ["97.696", "bg-[#b2ff00]"], ["-33.951", "bg-[#00ff00]"],
  ["-165.6", "bg-[#00ffb2]"], ["-297.25", "bg-[#00ffff]"], ["-428.89", "bg-[#00b2ff]"], ["-560.54", "bg-[#0000ff]"], ["-692.19 Min", ""],
];
const caption = ["Axial Force", "Type: Directional Axial Force(X Axis) (Unaveraged)", "Unit: N", "Solution Coordinate System", "Time: 1 s", "03/05/2025 4:17:04 pm"];

function Viewport() {
  return (
    <section className="relative min-h-0 flex-1 overflow-hidden bg-[radial-gradient(ellipse_farthest-corner_at_center,#5e5e5e_0%,#4b4b4b_34%,#323232_67%,#242424_85%,#202020_100%)] text-[19px] text-[#d6d6d6]">
      <svg className="absolute inset-0 size-full" viewBox="303 150 1265 613" fill="none" role="img" aria-label="Deformed truss coloured by axial force">
        {members.map((m, i) => <polyline key={i} points={poly(m.p)} stroke={m.c} strokeWidth={m.w} strokeLinejoin="round" />)}
        {members.map((m, i) => m.p.map(([x, y], j) => <ellipse key={`${i}-${j}`} cx={x} cy={y} rx="0.900" ry="1.500" fill="#141414" />))}
      </svg>
      <div className="relative flex h-full justify-between">
        <div className="pt-[23px] pl-[24px]">
          <div className="flex h-[179px] flex-col leading-[24px]">
            <p className="flex flex-1 items-center font-bold text-[#ececec]">A: Static Structural</p>
            {caption.map((c) => <p key={c} className="flex flex-1 items-center">{c}</p>)}
          </div>
          <div className="mt-[22px] flex gap-[15px]">
            <div className="mt-[15px] flex h-[258px] w-[27px] flex-col border-x border-y-2 border-[#d8d8d8]">
              {legend.slice(0, 9).map(([t, c], i) => <span key={t} className={`flex-1 ${c} ${i ? "border-t border-[#d8d8d8]" : ""}`} />)}
            </div>
            <ul className="flex h-[284px] flex-col">
              {legend.map(([t], i) => <li key={t} className={`flex flex-1 items-center leading-[28px] ${i === 0 || i === 9 ? "font-bold text-[#ececec]" : ""}`}>{t}</li>)}
            </ul>
          </div>
        </div>
        <div className="flex flex-col items-end pr-[8px] font-bold text-white">
          <span className="text-[56px] leading-[64px] font-extrabold">Λnsys</span>
          <span className="text-[27px] leading-[32px]">2025 R1</span>
          <span className="mt-[3px] h-[3px] w-[165px] bg-[#b5b5b5]" />
          <span className="mt-[4px] pr-[19px] text-[28px] leading-[34px]">STUDENT</span>
        </div>
      </div>
      <div className="absolute inset-x-0 bottom-[25px] flex justify-center">
        <div className="w-[348px] leading-[28px] whitespace-nowrap">
          <div className="flex justify-between">
            <span className="flex w-0 justify-center">0.000</span>
            <span className="flex w-0 justify-center">5.000</span>
            <span className="flex w-0 justify-center"><span className="pl-8">10.000 (m)</span></span>
          </div>
          <div className="grid h-[21px] grid-cols-4 border-y-2 border-r-2 border-[#a8a8a8]">
            <span className="bg-black" /><span /><span className="bg-black" /><span />
          </div>
          <div className="mt-[4px] flex justify-around">
            <span className="flex w-0 justify-center">2.500</span>
            <span className="flex w-0 justify-center">7.500</span>
          </div>
        </div>
      </div>
      <div className="absolute right-[23px] bottom-[100px]">
        <svg width="220" height="190" viewBox="0 0 220 190" fill="none" aria-label="Axis triad" fontFamily="Liberation Sans, sans-serif" fontSize="18">
          <path d="M96 151L80 60" stroke="#0a7a0a" strokeWidth="6" />
          <path d="M79 38l15 27c-6 5-16 5-21 2z" fill="#0a8a0a" />
          <circle cx="97" cy="105" r="11.500" fill="#00b8b8" /><circle cx="95" cy="102" r="6" fill="#10d4d4" />
          <path d="M96 150l62-4" stroke="#960000" strokeWidth="6" />
          <path d="M184 145l-26-11c-6 5-6 17 0 23z" fill="#c00000" /><path d="M184 145l-28 6c0 3 1 5 2 6z" fill="#8a0000" />
          <path d="M96 150l-46 15" stroke="#0000e0" strokeWidth="6" />
          <path d="M26 171l13-15c8 0 14 9 11 17l-7 4z" fill="#0000e0" /><path d="M26 171l24 0-7 6z" fill="#000090" />
          <text x="75" y="20" fill="#118a11">Y</text>
          <text x="199" y="144" fill="#c81414">X</text>
          <text x="14" y="174" fill="#1a1ae8">Z</text>
        </svg>
      </div>
    </section>
  );
}

/* ---------- graph panel ---------- */
const Film = ({ children, h = 24 }: P & { h?: number }) => (
  <Svg h={h}><rect x="1" y="3" width="22" height="18" fill="#2d2d30" stroke="#d0d0d0" strokeWidth="2" /><path d="M3 6h19M3 18h19" stroke="#d0d0d0" strokeWidth="3" strokeDasharray="2 1" />{children}</Svg>
);
const Bars = ({ c }: { c: string }) => (
  <Svg><path d="M1 1h22v18H1zM6 1v18M11 1v18M17 1v18M1 15h22" stroke={c} strokeWidth="1.700" /><path d="M1 22h22" stroke="#ee7b1f" strokeWidth="2" /><path d="M3 22v-3M9 22v-3M14 22v-3M21 22v-3" stroke="#ee7b1f" strokeWidth="2.500" /></Svg>
);

function GraphPanel() {
  return (
    <section className="flex min-w-0 flex-1 flex-col">
      <PanelHead title="Graph" />
      <div className="flex h-[40px] shrink-0 items-center bg-[#2d2d30] pl-[14px]">
        <Grip />
        <span className="ml-[19px] w-[90px] text-[17px]">Animation</span>
        <Tool name="First frame"><Svg><path d="M2 1v22" stroke="#fff" strokeWidth="3.500" /><path d="M22 1v22L6 12z" fill="#cfcfcf" /></Svg></Tool>
        <Tool name="Play"><Svg w={22}><path d="M4 2v20l16-10z" fill={ORANGE} /></Svg></Tool>
        <Tool name="Stop" on><Svg w={20} h={20}><rect x="1" y="1" width="22" height="22" fill="#e53935" /></Svg></Tool>
        <Tool name="Last frame"><Svg><path d="M21 1v22" stroke="#fff" strokeWidth="3.500" /><path d="M1 1v22l16-11z" fill="#cfcfcf" /></Svg></Tool>
        <Sep />
        <Tool name="Distributed" on><Bars c="#12a51f" /></Tool>
        <Tool name="Result sets"><Bars c="#2f72c0" /></Tool>
        <Sep />
        <div className="w-[149px]"><Combo name="Frames" value="20 Frames" /></div>
        <div className="ml-px w-[149px]"><Combo name="Duration" value="2 Sec (Auto)" /></div>
        <Sep />
        <Tool name="Update animation"><Film><path d="M6 13c3-6 9-5 11-1M17 8v5h-5" stroke="#e5332f" strokeWidth="2" /><rect x="14" y="15" width="8" height="8" fill="#2f72c0" /></Film></Tool>
        <Sep />
        <Tool name="Export animation"><Lens><path d="M8 6v10l8-5z" fill={ORANGE} /></Lens></Tool>
        <Tool name="Contour range"><Svg><rect x="1" y="1" width="22" height="7" fill="#e01010" /><rect x="1" y="9" width="22" height="7" fill="#009a10" /><rect x="1" y="17" width="22" height="6" fill="#2a55e0" /></Svg></Tool>
        <Tool name="Motion"><Svg><path d="M1 9c3-3 7-3 9-1 3 2 6 0 7-3 1-2 3-3 6-3M12 9c0 5-3 5-5 7-1 2-2 4-5 6M11 13c4 0 5 2 5 4s1 5 4 5" stroke="#9c9c9c" strokeWidth="2.500" /></Svg></Tool>
        <Tool name="Camera"><Svg><path d="M10 3l13 9-4 5-12-9z" fill="#c8c8c8" /><path d="M2 17h5l5-5M2 14v7" stroke="#c8c8c8" strokeWidth="2" /></Svg></Tool>
        <Sep />
        <Tool name="Keyframe"><Film><rect x="2" y="8" width="20" height="8" fill="#d0d0d0" /><circle cx="8" cy="12" r="2.500" stroke="#222" strokeWidth="1.500" /><path d="M11 12h7" stroke="#222" strokeWidth="1.800" /></Film></Tool>
        <Tool name="Keyframe settings"><Film><rect x="2" y="8" width="20" height="8" fill="#d0d0d0" /><circle cx="7" cy="12" r="2.500" stroke="#222" strokeWidth="1.500" /><circle cx="17" cy="18" r="4.500" fill="#444" stroke="#b5b5b5" strokeWidth="2" /></Film></Tool>
        <Sep />
        <Tool name="Frequency"><Svg><path d="M2 1v22M5 3v18M8 6v12M11 8v8M14 9v6M17 8v8M2 12h21M20 10v4" stroke="#c4c4c4" strokeWidth="1.700" /></Svg></Tool>
        <button aria-label="More" className="mr-[6px] ml-auto flex flex-col items-center gap-2">
          <Svg w={10} h={12} vb="0 0 10 12"><path d="M1 1l4 4 4-4M1 6l4 4 4-4" stroke="#a8a8a8" strokeWidth="1.700" /></Svg>
          <Tri w={9} color="#f4f4f4" />
        </button>
      </div>
      <div className="flex flex-1 flex-col bg-[#717171] pt-[37px] pr-[35px] pl-[29px]">
        <div className="flex">
          <span className="flex h-[82px] w-[36px] items-center justify-center pr-[2px] pb-2"><span className="-rotate-90 text-[19px] font-bold text-[#e8e8e8]">[N]</span></span>
          <span className="flex h-[82px] w-[11px] flex-col justify-between">
            {Array.from({ length: 11 }, (_, i) => <span key={i} className="h-px bg-[#a2a2a2]" />)}
          </span>
          <div className="relative flex-1">
            <div className="h-[82px] border border-l-2 border-[#a2a2a2] border-l-[#e2e2e2]" />
            <div className="flex h-[11px] justify-between">
              {Array.from({ length: 11 }, (_, i) => <span key={i} className="w-px bg-[#a8a8a8]" />)}
            </div>
            <span className="absolute -top-[2px] -left-[2px] size-[5px] bg-[#3fae3f]" />
            <span className="absolute top-[79px] -left-[2px] size-[5px] bg-[#c01010]" />
          </div>
        </div>
        <div className="pt-[16px] pl-[47px] text-center font-bold leading-[30px] text-[#e8e8e8]">[s]</div>
        <div className="mt-[4px] ml-[47px] h-[23px] border border-[#9c9c9c]" />
      </div>
      <nav className="flex h-[28px] shrink-0 bg-[#292c32] text-[17px]">
        <button className="w-[95px] text-center">Messages</button>
        <button className="w-[65px] bg-[#212121] text-[#1592e6]">Graph</button>
      </nav>
    </section>
  );
}

/* ---------- tabular data ---------- */
function HeadCheck({ label, c }: { label: string; c: string }) {
  return (
    <label className={`flex items-center gap-[5px] ${c}`}>
      <span className="relative flex size-[22px] shrink-0">
        <input type="checkbox" defaultChecked className="size-[22px] appearance-none bg-white" />
        <span className="pointer-events-none absolute inset-0 flex items-center justify-center"><Svg w={13} h={13}><path d="M2 11l7 8L22 4" stroke="#000" strokeWidth="5" /></Svg></span>
      </span>
      {label}
    </label>
  );
}

function Tabular() {
  const cell = "border-r border-b border-[#d4d4d4] px-1 py-0 text-left font-normal whitespace-nowrap";
  return (
    <section className="flex min-w-0 flex-1 flex-col bg-[#212121]">
      <PanelHead title="Tabular Data" />
      <table className="w-[373px] table-fixed border-collapse border-t border-[#f0f0f0] bg-[#424242]">
        <colgroup><col className="w-[22px]" /><col className="w-[70px]" /><col className="w-[140px]" /><col /></colgroup>
        <thead>
          <tr className="h-[26px] bg-[#646464]">
            <td className="border border-[#d4d4d4]" />
            <th scope="col" className={`${cell} text-[#141414]`}>Time [s]</th>
            <th scope="col" className={cell}><HeadCheck label="Minimum [N]" c="text-[#c4161c]" /></th>
            <th scope="col" className={cell}><HeadCheck label="Maximum [N]" c="text-[#4fa64f]" /></th>
          </tr>
        </thead>
        <tbody>
          <tr className="h-[22px] leading-[20px]">
            <th scope="row" className={`${cell} bg-[#646464]`}>1</th>
            <td className={cell}>1.</td>
            <td className={cell}>-692.19</td>
            <td className={cell}>492.64</td>
          </tr>
        </tbody>
      </table>
    </section>
  );
}

export default function App() {
  return (
    <div className="flex h-screen min-h-[1200px] flex-col overflow-hidden bg-[#292c32] font-['Open_Sans','Noto_Sans',sans-serif] text-[16px] leading-[22px] text-[#f0f0f0]">
      <TitleBar />
      <Ribbon />
      <main className="flex min-h-0 flex-1 gap-[5px]">
        <aside className="flex w-[490px] shrink-0 flex-col border-r border-[#3a3d44]">
          <Outline />
          <Details />
        </aside>
        <div className="flex min-w-0 flex-1 flex-col">
          <GraphicsToolbar />
          <Viewport />
          <div className="mt-[5px] flex h-[319px] shrink-0">
            <div className="flex min-w-0 flex-1"><GraphPanel /></div>
            <div className="ml-[6px] flex min-w-0 flex-1"><Tabular /></div>
          </div>
        </div>
      </main>
      <footer className="flex h-[30px] shrink-0 items-center bg-[#414141] pt-px pr-[10px] pl-3 text-[17px]">
        <span className="mr-auto">Ready</span>
        <button className="flex items-center gap-[3px]">
          <Svg><path d="M1 6h22v12H10l-5 6v-6H1z" fill="#f8d84a" /><path d="M12 6V3a3 3 0 016 0v8a4 4 0 01-7 0" stroke="#222" strokeWidth="2" /></Svg>
          No Messages
        </button>
        <span className="ml-[26px]">No Selection</span>
        <button className="ml-[34px] flex items-center gap-2"><Tri up w={13} color="#fff" />Metric (m, kg, N, s, V, A)</button>
        <span className="ml-5">Degrees</span>
        <span className="ml-5">rad/s</span>
        <span className="ml-[18px]">Celsius</span>
      </footer>
    </div>
  );
}
